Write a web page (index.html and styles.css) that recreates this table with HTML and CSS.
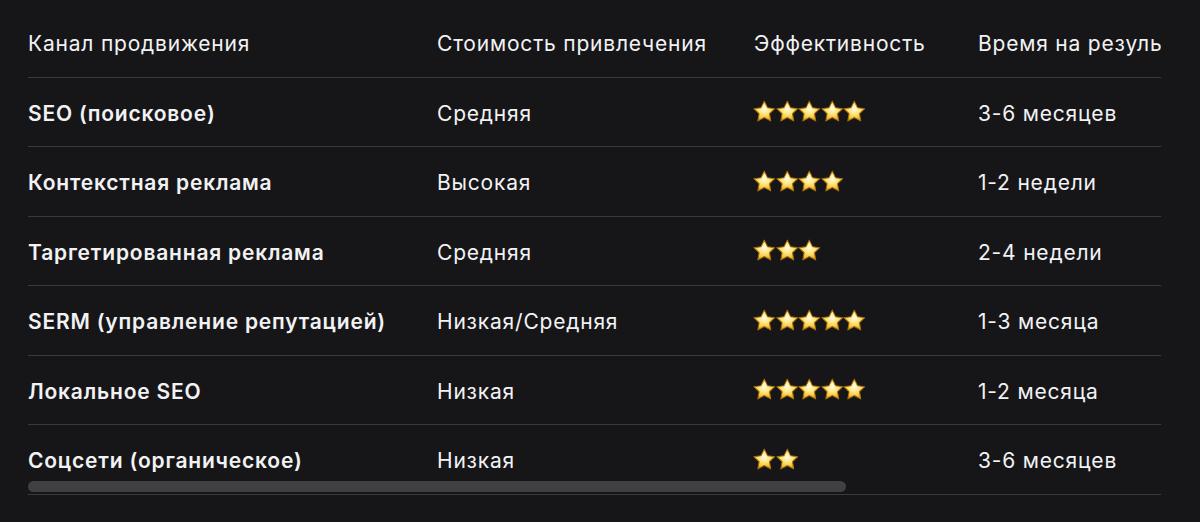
FILE: index.html
```html
<!DOCTYPE html>
<html lang="ru">
<head>
<meta charset="utf-8">
<link rel="stylesheet" href="styles.css">
</head>
<body>
<svg width="0" height="0" class="defs">
  <defs>
    <radialGradient id="sg" cx="50%" cy="38%" r="62%">
      <stop offset="0" stop-color="#fffce6"/>
      <stop offset="0.4" stop-color="#ffe98a"/>
      <stop offset="0.8" stop-color="#f7c437"/>
      <stop offset="1" stop-color="#e39b0b"/>
    </radialGradient>
    <symbol id="star" viewBox="0 0.4 24 23">
      <path d="M12 1L15.41 7.91L23.03 9.02L17.52 14.39L18.82 21.98L12 18.4L5.18 21.98L6.48 14.39L0.97 9.02L8.59 7.91Z" fill="url(#sg)" stroke="#a8700c" stroke-width="1.1" stroke-linejoin="round"/>
    </symbol>
  </defs>
</svg>
<div class="wrap">
  <table class="grid">
    <colgroup>
      <col class="c1"><col class="c2"><col class="c3"><col class="c4">
    </colgroup>
    <thead>
      <tr><th>Канал продвижения</th><th>Стоимость привлечения</th><th>Эффективность</th><th>Время на результат</th></tr>
    </thead>
    <tbody>
      <tr><td class="name">SEO (поисковое)</td><td>Средняя</td><td><span class="stars"><svg><use href="#star"/></svg><svg><use href="#star"/></svg><svg><use href="#star"/></svg><svg><use href="#star"/></svg><svg><use href="#star"/></svg></span></td><td>3-6 месяцев</td></tr>
      <tr><td class="name">Контекстная реклама</td><td>Высокая</td><td><span class="stars"><svg><use href="#star"/></svg><svg><use href="#star"/></svg><svg><use href="#star"/></svg><svg><use href="#star"/></svg></span></td><td>1-2 недели</td></tr>
      <tr><td class="name">Таргетированная реклама</td><td>Средняя</td><td><span class="stars"><svg><use href="#star"/></svg><svg><use href="#star"/></svg><svg><use href="#star"/></svg></span></td><td>2-4 недели</td></tr>
      <tr><td class="name">SERM (управление репутацией)</td><td>Низкая/Средняя</td><td><span class="stars"><svg><use href="#star"/></svg><svg><use href="#star"/></svg><svg><use href="#star"/></svg><svg><use href="#star"/></svg><svg><use href="#star"/></svg></span></td><td>1-3 месяца</td></tr>
      <tr><td class="name">Локальное SEO</td><td>Низкая</td><td><span class="stars"><svg><use href="#star"/></svg><svg><use href="#star"/></svg><svg><use href="#star"/></svg><svg><use href="#star"/></svg><svg><use href="#star"/></svg></span></td><td>1-2 месяца</td></tr>
      <tr><td class="name">Соцсети (органическое)</td><td>Низкая</td><td><span class="stars"><svg><use href="#star"/></svg><svg><use href="#star"/></svg></span></td><td>3-6 месяцев</td></tr>
    </tbody>
  </table>
  <div class="thumb"></div>
</div>
</body>
</html>
```
FILE: styles.css
```css
html, body {
  margin: 0;
  padding: 0;
  background: #161618;
}
body {
  font-family: Inter, "Noto Sans", sans-serif;
  color: #f2f2f4;
  padding: 8px 0 0 28px;
}
.defs {
  position: absolute;
  width: 0;
  height: 0;
}
.wrap {
  position: relative;
  width: 1133px;
  overflow: hidden;
}
.grid {
  border-collapse: collapse;
  table-layout: fixed;
  width: 1569px;
}
.c1 { width: 409px; }
.c2 { width: 317px; }
.c3 { width: 224px; }
.c4 { width: 619px; }
.grid th,
.grid td {
  text-align: left;
  font-size: 21px;
  letter-spacing: 0.8px;
  line-height: 28px;
  padding: 22px 0 18.5px 0;
  border-bottom: 1px solid #3a3a3d;
  white-space: nowrap;
  vertical-align: middle;
}
.grid th {
  font-weight: 400;
}
.grid td.name {
  font-weight: 600;
}
.stars {
  display: inline-flex;
  vertical-align: middle;
  margin-top: -6px;
  margin-left: -1px;
}
.stars svg {
  width: 22.6px;
  height: 22.8px;
  overflow: visible;
}
.thumb {
  position: absolute;
  left: 0;
  bottom: 3px;
  width: 818px;
  height: 11px;
  border-radius: 6px;
  background: #404042;
}
```
